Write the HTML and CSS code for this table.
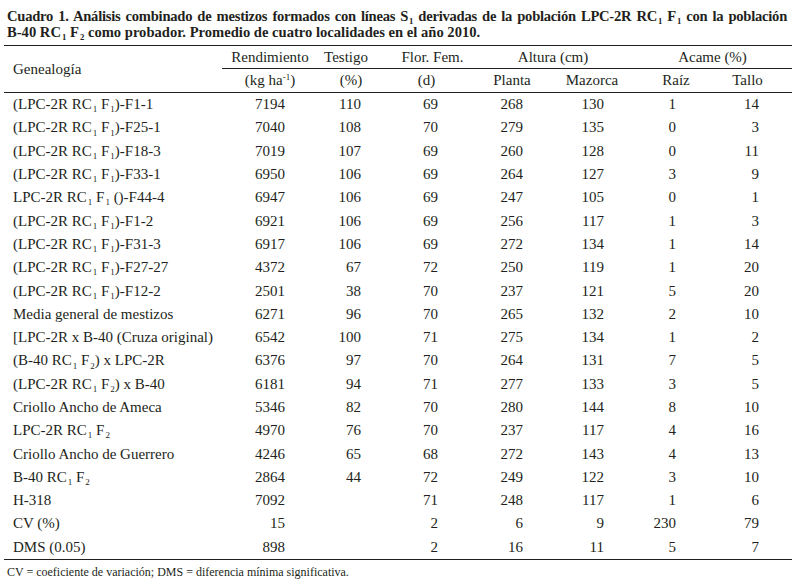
FILE: index.html
```html
<!DOCTYPE html>
<html lang="es">
<head>
<meta charset="utf-8">
<title>Cuadro 1</title>
<link rel="stylesheet" href="styles.css">
</head>
<body>
<div class="page">
  <div class="caption">
    <span class="cap-line cap-first">Cuadro 1. Análisis combinado de mestizos formados con líneas S<sub class="sb">1</sub> derivadas de la población LPC-2R RC<sub class="sb">1</sub> F<sub class="sb">1</sub> con la población</span>
    <span class="cap-line">B-40 RC<sub class="sb">1</sub> F<sub class="sb">2</sub> como probador. Promedio de cuatro localidades en el año 2010.</span>
  </div>
  <table class="tbl">
    <colgroup>
      <col class="c1"><col class="c2"><col class="c3"><col class="c4"><col class="c5"><col class="c6"><col class="c7"><col class="c8">
    </colgroup>
    <thead>
      <tr class="h1">
        <th class="gen" rowspan="2">Genealogía</th>
        <th class="grp">Rendimiento</th>
        <th class="grp">Testigo</th>
        <th class="grp flor">Flor. Fem.</th>
        <th class="grp alt" colspan="2">Altura (cm)</th>
        <th class="grp aca" colspan="2">Acame (%)</th>
      </tr>
      <tr class="h2">
        <th class="sub kg">(kg ha<sup class="sp">-1</sup>)</th>
        <th class="sub pct">(%)</th>
        <th class="sub dd">(d)</th>
        <th class="sub pl">Planta</th>
        <th class="sub mz">Mazorca</th>
        <th class="sub rz">Raíz</th>
        <th class="sub tl">Tallo</th>
      </tr>
    </thead>
    <tbody>
      <tr><td>(LPC-2R RC<sub class="sb">1</sub> F<sub class="sb">1</sub>)-F1-1</td><td>7194</td><td>110</td><td>69</td><td>268</td><td>130</td><td>1</td><td>14</td></tr>
      <tr><td>(LPC-2R RC<sub class="sb">1</sub> F<sub class="sb">1</sub>)-F25-1</td><td>7040</td><td>108</td><td>70</td><td>279</td><td>135</td><td>0</td><td>3</td></tr>
      <tr><td>(LPC-2R RC<sub class="sb">1</sub> F<sub class="sb">1</sub>)-F18-3</td><td>7019</td><td>107</td><td>69</td><td>260</td><td>128</td><td>0</td><td>11</td></tr>
      <tr><td>(LPC-2R RC<sub class="sb">1</sub> F<sub class="sb">1</sub>)-F33-1</td><td>6950</td><td>106</td><td>69</td><td>264</td><td>127</td><td>3</td><td>9</td></tr>
      <tr><td>LPC-2R RC<sub class="sb">1</sub> F<sub class="sb">1</sub> ()-F44-4</td><td>6947</td><td>106</td><td>69</td><td>247</td><td>105</td><td>0</td><td>1</td></tr>
      <tr><td>(LPC-2R RC<sub class="sb">1</sub> F<sub class="sb">1</sub>)-F1-2</td><td>6921</td><td>106</td><td>69</td><td>256</td><td>117</td><td>1</td><td>3</td></tr>
      <tr><td>(LPC-2R RC<sub class="sb">1</sub> F<sub class="sb">1</sub>)-F31-3</td><td>6917</td><td>106</td><td>69</td><td>272</td><td>134</td><td>1</td><td>14</td></tr>
      <tr><td>(LPC-2R RC<sub class="sb">1</sub> F<sub class="sb">1</sub>)-F27-27</td><td>4372</td><td>67</td><td>72</td><td>250</td><td>119</td><td>1</td><td>20</td></tr>
      <tr><td>(LPC-2R RC<sub class="sb">1</sub> F<sub class="sb">1</sub>)-F12-2</td><td>2501</td><td>38</td><td>70</td><td>237</td><td>121</td><td>5</td><td>20</td></tr>
      <tr><td>Media general de mestizos</td><td>6271</td><td>96</td><td>70</td><td>265</td><td>132</td><td>2</td><td>10</td></tr>
      <tr><td>[LPC-2R x B-40 (Cruza original)</td><td>6542</td><td>100</td><td>71</td><td>275</td><td>134</td><td>1</td><td>2</td></tr>
      <tr><td>(B-40 RC<sub class="sb">1</sub> F<sub class="sb">2</sub>) x LPC-2R</td><td>6376</td><td>97</td><td>70</td><td>264</td><td>131</td><td>7</td><td>5</td></tr>
      <tr><td>(LPC-2R RC<sub class="sb">1</sub> F<sub class="sb">2</sub>) x B-40</td><td>6181</td><td>94</td><td>71</td><td>277</td><td>133</td><td>3</td><td>5</td></tr>
      <tr><td>Criollo Ancho de Ameca</td><td>5346</td><td>82</td><td>70</td><td>280</td><td>144</td><td>8</td><td>10</td></tr>
      <tr><td>LPC-2R RC<sub class="sb">1</sub> F<sub class="sb">2</sub></td><td>4970</td><td>76</td><td>70</td><td>237</td><td>117</td><td>4</td><td>16</td></tr>
      <tr><td>Criollo Ancho de Guerrero</td><td>4246</td><td>65</td><td>68</td><td>272</td><td>143</td><td>4</td><td>13</td></tr>
      <tr><td>B-40 RC<sub class="sb">1</sub> F<sub class="sb">2</sub></td><td>2864</td><td>44</td><td>72</td><td>249</td><td>122</td><td>3</td><td>10</td></tr>
      <tr><td>H-318</td><td>7092</td><td></td><td>71</td><td>248</td><td>117</td><td>1</td><td>6</td></tr>
      <tr><td>CV (%)</td><td>15</td><td></td><td>2</td><td>6</td><td>9</td><td>230</td><td>79</td></tr>
      <tr class="last"><td>DMS (0.05)</td><td>898</td><td></td><td>2</td><td>16</td><td>11</td><td>5</td><td>7</td></tr>
    </tbody>
  </table>
  <p class="note">CV = coeficiente de variación; DMS = diferencia mínima significativa.</p>
</div>
</body>
</html>
```

FILE: styles.css
```css
html, body {
  margin: 0;
  padding: 0;
  background: #ffffff;
}

body {
  font-family: "Liberation Serif", "Times New Roman", serif;
  color: #231f20;
}

.page {
  width: 796px;
  padding: 8px 0 0 0;
  box-sizing: border-box;
}

.caption {
  margin: 0 9px 0 7px;
  font-size: 14.6px;
  font-weight: bold;
  line-height: 16px;
}

.cap-line {
  display: block;
  white-space: nowrap;
}

.cap-first {
  text-align: justify;
  text-align-last: justify;
  white-space: normal;
  letter-spacing: -0.25px;
}

.sb {
  font-size: 0.6em;
  vertical-align: -0.35em;
  line-height: 0;
  margin-left: 1px;
}

.sp {
  font-size: 0.6em;
  vertical-align: 0.55em;
  line-height: 0;
}

.tbl {
  margin: 5px 0 0 4px;
  width: 788px;
  table-layout: fixed;
  border-collapse: collapse;
  border-spacing: 0;
  font-size: 15px;
  border-top: 1px solid #231f20;
}

.c1 { width: 218px; }
.c2 { width: 98px; }
.c3 { width: 62px; }
.c4 { width: 93px; }
.c5 { width: 74px; }
.c6 { width: 91px; }
.c7 { width: 68px; }
.c8 { width: 84px; }

th {
  font-weight: normal;
  padding: 0;
  white-space: nowrap;
}

.h1 th {
  height: 22px;
  text-align: center;
}

.h1 .grp {
  border-bottom: 1px solid #231f20;
}

.h1 .gen {
  text-align: left;
  padding-left: 9px;
  vertical-align: middle;
  border-bottom: 1px solid #231f20;
}

.h2 th {
  height: 23px;
  text-align: center;
  border-bottom: 1px solid #231f20;
}

.h1 .grp:nth-child(2) { padding-right: 2px; }
.h1 .grp:nth-child(3) { padding-right: 10px; }
.h1 .flor { padding-left: 8px; }
.h1 .alt { padding-right: 9px; }
.h1 .aca { padding-right: 7px; }

.kg { padding-right: 2px; }
.dd { padding-right: 4px; }
.mz { padding-right: 5px; }
.rz { padding-left: 4px; }
.tl { padding-right: 5px; }

td {
  height: 23.3px;
  padding: 0;
  white-space: nowrap;
  text-align: right;
  vertical-align: middle;
}

td:nth-child(1) { text-align: left; padding-left: 9px; }
td:nth-child(2) { padding-right: 35px; }
td:nth-child(3) { padding-right: 21px; }
td:nth-child(4) { padding-right: 37px; }
td:nth-child(5) { padding-right: 26px; }
td:nth-child(6) { padding-right: 36px; }
td:nth-child(7) { padding-right: 32px; }
td:nth-child(8) { padding-right: 33px; }

.last td {
  border-bottom: 1px solid #231f20;
}

.note {
  margin: 5px 0 0 7px;
  font-size: 12px;
  line-height: 14px;
}
```
